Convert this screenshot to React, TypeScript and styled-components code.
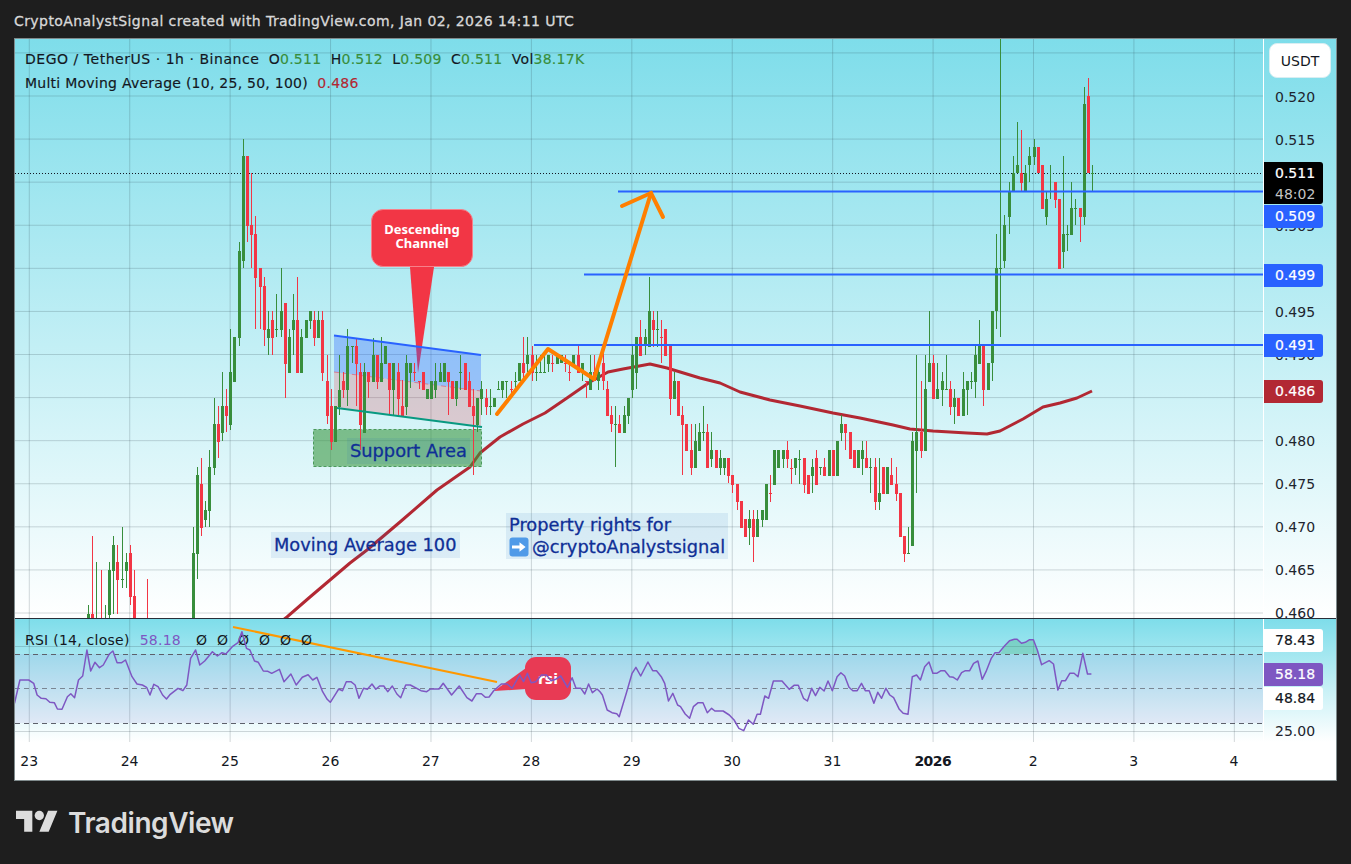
import React from 'react';
import styled, { createGlobalStyle } from 'styled-components';

const FONT = '"DejaVu Sans", "Noto Sans", sans-serif';
const UP = '#388e3c';
const DOWN = '#f23645';
const BLUE = '#2962ff';
const PURPLE = '#7e57c2';

const GlobalStyle = createGlobalStyle`
    html, body {
        margin: 0;
        padding: 0;
        background: #1e1e1e;
    }
    body {
        font-family: ${FONT};
    }
`;

const Page = styled.div`
    width: 1351px;
    height: 864px;
    background: #1e1e1e;
    overflow: hidden;
    display: flex;
    flex-direction: column;
`;

const Header = styled.div`
    height: 38px;
    box-sizing: border-box;
    padding: 3px 0 0 14px;
    display: flex;
    align-items: center;
    color: #d8d8d8;
    font-size: 14px;
    letter-spacing: 0.42px;
    -webkit-text-stroke: 0.3px #d8d8d8;
`;

const Frame = styled.div`
    width: 1321px;
    margin-left: 14px;
    border: 1px solid #7f8a8c;
    display: flex;
    flex-direction: column;
    background: #fff;
`;

const PricePane = styled.div`
    height: 579px;
    display: flex;
    background: linear-gradient(#7eddea, #ffffff);
    border-bottom: 1px solid #2a2e39;
    overflow: hidden;
`;

const RsiPane = styled.div`
    height: 123px;
    display: flex;
    background: linear-gradient(#7eddea, #ffffff);
    overflow: hidden;
`;

const Plot = styled.div`
    position: relative;
    width: 1248px;
    flex: none;
    border-right: 1px solid #ffffff;
    svg {
        display: block;
    }
`;

const Axis = styled.div`
    position: relative;
    flex: 1;
    display: flex;
    flex-direction: column;
    padding-left: 11px;
    color: #20242e;
    font-size: 14px;
`;

const PriceTicks = styled(Axis)`
    padding-top: 36px;
`;

const Tick = styled.div`
    height: 43.08px;
    flex: none;
    display: flex;
    align-items: center;
`;

const Currency = styled.div`
    position: absolute;
    top: 4px;
    left: 5px;
    width: 60px;
    height: 33px;
    border: 1px solid #d9eef2;
    border-radius: 8px;
    background: #fff;
    color: #131722;
    font-size: 14px;
    display: flex;
    align-items: center;
    justify-content: center;
`;

const Tag = styled.div<{ $top: number; $bg: string; $height?: number; $color?: string }>`
    position: absolute;
    left: 0;
    top: ${(p) => p.$top}px;
    width: 48px;
    height: ${(p) => p.$height ?? 23}px;
    padding-left: 11px;
    border-radius: 0 3px 3px 0;
    background: ${(p) => p.$bg};
    color: ${(p) => p.$color ?? '#fff'};
    font-size: 14px;
    line-height: 23px;
    -webkit-text-stroke: 0.2px ${(p) => p.$color ?? '#fff'};
`;

const Countdown = styled.div`
    color: #c4c4c4;
    font-size: 14px;
    line-height: 19px;
    -webkit-text-stroke: 0;
`;

const LastPrice = styled.div`
    line-height: 23px;
`;

const PlainTick = styled.div`
    position: absolute;
    left: 11px;
    top: 102px;
    line-height: 20px;
`;

const TimeAxis = styled.div`
    height: 38px;
    overflow: hidden;
    display: flex;
    background: #fff;
    color: #131722;
    font-size: 14px;
`;

const TimeRow = styled.div`
    margin-left: -36px;
    display: flex;
`;

const TimeLabel = styled.div<{ $strong?: boolean }>`
    width: 100.42px;
    flex: none;
    display: flex;
    align-items: center;
    justify-content: center;
    font-weight: ${(p) => (p.$strong ? 700 : 400)};
    letter-spacing: ${(p) => (p.$strong ? '-0.5px' : '0')};
`;

const Legend = styled.div`
    position: absolute;
    top: 10px;
    left: 10px;
    display: flex;
    flex-direction: column;
    gap: 3px;
    color: #131722;
    font-size: 14px;
    line-height: 21px;
    white-space: pre;
    -webkit-text-stroke: 0.15px currentColor;
`;

const LegendRow = styled.div`
    letter-spacing: 0.25px;
`;

const LegendTitle = styled.span`
    letter-spacing: 0.53px;
`;

const Value = styled.span<{ $color: string }>`
    color: ${(p) => p.$color};
`;

const RsiLegend = styled.div`
    position: absolute;
    top: 11px;
    left: 10px;
    display: flex;
    align-items: center;
    color: #131722;
    font-size: 14px;
    line-height: 20px;
    letter-spacing: 0.25px;
`;

const RsiValue = styled.span`
    color: ${PURPLE};
    margin: 0 15px 0 10px;
`;

const EmptySlot = styled.span`
    width: 21px;
    flex: none;
`;

const Callout = styled.div`
    position: absolute;
    left: 356px;
    top: 170px;
    width: 100px;
    height: 52px;
    padding-bottom: 4px;
    border: 1px solid #f7808a;
    border-radius: 12px;
    background: ${DOWN};
    color: #fff;
    font-family: "Noto Sans", sans-serif;
    font-size: 13px;
    font-weight: 700;
    line-height: 14px;
    display: flex;
    align-items: center;
    justify-content: center;
    text-align: center;
`;

const RsiCallout = styled.div`
    position: absolute;
    left: 510px;
    top: 38px;
    width: 46px;
    height: 43px;
    border-radius: 11px;
    background: #e83a54;
    color: #fff;
    font-size: 14px;
    font-weight: 700;
    display: flex;
    align-items: center;
    justify-content: center;
`;

const Note = styled.div`
    position: absolute;
    padding: 1px 3px;
    background: rgba(33, 110, 190, 0.1);
    color: #0f2f96;
    font-size: 17.8px;
    line-height: 24px;
    white-space: nowrap;
    -webkit-text-stroke: 0.3px #0f2f96;
`;

const SupportNote = styled(Note)`
    left: 332px;
    top: 399px;
`;

const AverageNote = styled(Note)`
    left: 256px;
    top: 493px;
`;

const RightsNote = styled(Note)`
    left: 491px;
    top: 474px;
    line-height: 22px;
`;

const RightsLine = styled.div`
    display: flex;
    align-items: center;
    gap: 3px;
`;

const Footer = styled.div`
    height: 83px;
    padding-left: 16px;
    display: flex;
    align-items: center;
    gap: 10px;
    color: #dcdcdc;
    font-family: Inter, sans-serif;
    font-size: 28px;
    font-weight: 600;
    letter-spacing: -0.45px;
`;

// [up, wick top, body top, body bottom, wick bottom] in page pixels, one per hour, null = off the pane
type Candle = [number, number, number, number, number] | null;
const FIRST_CANDLE = -34;
const candles: Candle[] = [
    [1,605,614,620,620],[0,536,614,620,620],[1,562,620,620,620],[0,570,620,620,620],[1,605,620,620,620],
    [1,562,570,615,618],[1,536,545,571,614],[0,545,562,580,614],[1,527,579,580,588],[1,553,562,571,588],
    [0,545,553,597,605],[0,570,596,620,620],null,null,[0,579,620,620,620],
    null,null,null,null,null,null,null,null,null,null,
    [1,527,553,620,620],[1,467,475,554,579],[0,458,484,528,536],[1,501,510,520,527],[1,450,467,511,527],
    [1,398,424,468,475],[0,406,424,442,458],[1,372,406,433,441],[0,389,406,416,432],
    [1,329,372,425,430],[1,337,337,382,382],[1,242,251,338,346],[1,139,156,261,268],[0,156,156,226,242],
    [0,173,225,235,268],[0,216,234,278,329],[0,268,268,287,329],[0,277,286,330,346],[1,311,329,338,355],
    [0,311,320,338,355],[1,294,329,330,337],[1,268,311,330,337],[0,303,303,364,398],[1,329,337,373,373],
    [1,294,320,330,355],[0,277,320,373,373],[1,329,337,373,373],[1,320,320,338,338],[1,311,311,321,329],
    [0,311,320,338,346],[1,311,320,338,338],[0,311,320,373,381],[0,355,381,416,424],[0,389,406,442,450],
    [1,406,406,442,442],[1,355,390,407,415],[0,372,381,390,398],[1,329,346,390,406],[1,346,346,347,363],
    [0,338,346,364,406],[0,363,372,425,450],[1,363,372,433,433],[0,372,372,382,398],[1,338,355,382,382],
    [0,355,355,382,389],[1,337,363,382,382],[1,346,346,364,364],[0,363,363,390,415],[1,363,363,390,415],
    [0,363,372,399,415],[0,380,406,416,416],[1,355,363,407,415],[1,363,363,373,388],[0,363,372,373,381],
    [0,381,381,382,389],[0,372,372,390,390],[1,389,389,399,399],[1,381,381,399,399],[1,363,381,390,398],
    [1,363,372,382,382],[1,363,363,382,382],[0,372,372,382,415],[0,381,381,399,399],[1,381,381,399,406],
    [1,355,372,373,390],[0,363,363,390,390],[0,372,381,407,407],[0,389,406,416,475],[1,398,398,425,432],
    [1,381,389,399,415],[0,389,398,407,415],[1,389,406,407,415],[1,398,398,407,407],[1,381,389,390,390],
    [1,381,381,390,398],[1,381,381,382,398],[0,381,389,390,398],[1,372,381,382,389],[1,363,363,381,381],
    [0,337,363,373,381],[1,337,355,364,372],[0,346,355,373,381],[1,355,372,373,381],[1,355,372,373,372],
    [1,355,372,373,372],[1,355,355,364,372],[0,355,363,364,372],[1,355,355,364,364],[1,355,355,363,363],[0,355,363,364,372],
    [0,363,372,373,381],[1,355,355,364,364],[0,345,355,373,373],[1,363,363,373,381],[0,381,381,382,398],
    [1,355,372,390,390],[0,355,372,381,381],[1,363,372,381,390],[0,346,363,381,390],[0,381,389,416,416],
    [0,406,415,424,432],[1,406,424,425,467],[0,415,424,433,433],[1,406,415,433,433],[1,398,398,416,424],
    [1,345,355,390,398],[1,337,337,373,389],[0,320,337,356,356],[1,329,337,346,355],[1,277,311,347,347],
    [0,311,320,330,347],[1,311,329,330,347],[0,320,337,338,363],[0,329,329,356,356],[0,346,346,399,415],
    [1,372,381,399,399],[0,381,381,416,416],[0,406,415,425,475],[0,424,424,451,451],[0,424,450,468,475],
    [1,424,441,468,468],[1,423,432,451,451],[1,406,432,433,441],[0,424,432,468,468],[1,432,450,459,467],
    [0,450,450,468,468],[1,450,458,468,475],[1,458,458,468,475],[0,458,458,476,483],[0,475,475,485,493],
    [0,484,484,502,510],[0,501,501,528,528],[0,519,519,537,537],[1,510,519,528,545],[0,510,519,537,562],
    [1,510,519,537,537],[1,510,510,520,527],[1,484,484,520,520],[0,475,493,494,502],[1,450,450,485,485],
    [1,450,450,468,468],[1,450,450,459,468],[0,441,450,459,468],[0,459,468,469,484],[1,459,458,468,475],
    [1,450,459,460,484],[0,458,458,485,493],[0,475,475,494,494],[1,459,467,476,493],[0,450,458,485,485],
    [1,467,467,468,475],[0,458,467,476,476],[1,450,450,476,476],[0,450,450,476,476],[1,441,441,476,476],
    [1,415,424,433,441],[0,424,424,433,450],[0,432,432,459,459],[0,450,450,468,468],[1,450,450,468,468],
    [1,441,450,459,475],[0,441,458,468,468],[1,458,467,468,493],[0,458,467,502,510],[1,458,493,502,510],
    [0,467,467,494,494],[1,467,467,494,494],[0,458,475,485,485],[0,467,484,494,501],[0,493,493,537,537],
    [0,536,536,554,562],[1,527,553,554,554],[1,432,441,546,546],[1,355,432,451,493],[0,381,432,451,458],
    [1,355,389,451,451],[1,311,363,382,382],[0,355,363,399,399],[1,363,389,399,399],[1,372,381,390,406],
    [1,355,389,390,390],[0,381,389,407,415],[1,389,398,407,424],[0,398,398,416,416],[1,372,389,416,416],
    [1,381,381,390,415],[1,372,381,382,389],[1,345,355,382,398],[1,320,346,364,364],[0,346,346,390,406],
    [1,363,363,390,390],[1,311,311,363,381],[1,234,268,311,329],[1,38,268,269,337],[1,215,225,261,268],
    [1,182,191,217,234],[1,156,173,192,192],[1,122,165,173,173],[0,130,173,183,191],[1,165,173,192,192],
    [1,147,156,165,182],[1,139,147,157,165],[0,147,147,173,173],[0,165,165,209,209],[1,191,199,217,225],
    [1,165,191,192,199],[0,182,182,200,208],[0,199,199,269,269],[1,156,234,252,268],[1,225,234,235,251],
    [1,182,208,235,235],[1,199,208,209,225],[0,208,208,217,242],[1,87,104,217,225],[0,78,96,173,173],
    [1,165,173,174,191],
];

const maLine = '283,620 287,617 310,597 330,580 350,563 367,550 400,522 437,490 470,467 480,453 500,437 523,424 545,413 567,398 590,382 608,372 623,369 650,364 667,368 700,378 720,383 740,392 770,400 800,406 833,413 860,418 893,425 910,429 933,431 967,433 987,434 1000,431 1023,419 1043,407 1060,403 1077,398 1092,391';

// traced from the pane in two passes; x in crop units is rescaled below
const rsiA = [38,310,52,240,75,240,88,250,97,285,108,295,120,296,130,307,142,308,150,327,162,328,176,290,185,281,195,293,205,240,216,228,227,150,237,213,248,187,260,203,270,195,285,163,295,153,306,188,318,188,328,180,345,230,358,252,372,255,383,262,392,285,402,253,413,260,425,285,435,297,445,283,465,265,478,272,488,255,498,175,511,150,522,195,535,183,555,155,568,168,580,158,590,162,607,140,622,128,632,95,644,145,653,150,665,183,675,187,688,213,700,214,710,220,730,208,742,245,760,222,774,255,790,232,805,224,817,240,828,232,843,275,855,298,863,307,878,280,885,267,895,272,905,245,917,245,928,255,938,295,950,265,960,268,972,252,982,268,992,258,1003,258,1013,275,1025,258,1037,282,1047,293,1060,255,1072,255,1100,272,1115,275,1125,267,1147,267,1158,250,1180,285,1200,258,1220,293,1233,303,1245,281,1258,281,1268,292,1278,291,1290,272,1310,252,1325,252,1338,265,1358,225,1368,245,1378,220,1388,248,1400,245,1415,225,1428,225,1440,242,1452,238,1465,228,1483,262,1495,233,1505,265,1518,265,1528,282,1538,252,1548,278,1560,267];
const rsiB = [0,275,5,285,15,330,25,338,35,341,40,350,55,280,67,220,75,202,85,228,100,186,110,212,118,212,128,230,135,250,143,303,152,280,162,315,168,320,178,342,187,355,195,320,205,308,215,308,224,338,233,325,240,333,257,333,270,345,280,360,290,385,300,392,310,360,320,373,328,343,335,343,344,288,352,295,362,243,380,243,395,268,405,256,414,256,425,295,433,303,442,265,450,287,459,262,468,273,476,243,485,272,495,230,503,218,511,228,520,262,528,272,537,272,546,250,554,272,562,272,572,310,580,277,588,295,597,265,605,285,613,293,625,328,633,340,643,343,652,230,661,225,669,240,678,200,687,186,695,220,703,220,712,212,720,212,730,230,738,232,746,240,755,218,763,212,772,212,780,190,789,183,798,238,806,215,817,175,825,158,833,158,845,137,855,122,865,118,871,118,880,130,888,127,897,119,905,119,913,150,922,194,938,182,947,192,956,270,964,242,972,242,981,220,990,220,998,230,1008,160,1018,222,1026,222];

const toPoints = (raw: number[], scale: number, x0: number) => {
    const out: string[] = [];
    for (let i = 0; i < raw.length; i += 2) {
        out.push(`${(x0 + raw[i] / scale).toFixed(1)},${(600 + raw[i + 1] / 3).toFixed(1)}`);
    }
    return out.join(' ');
};
const rsiLine = `${toPoints(rsiA, 2.613, 0)} ${toPoints(rsiB, 2.088, 600)}`;

const priceY = (p: number) => 96 + (0.52 - p) * 8617;
const priceLevels = Array.from({ length: 14 }, (_, i) => 0.525 - i * 0.005);
const dayLines = Array.from({ length: 13 }, (_, i) => 29.3 + i * 100.42);
const GRID = 'rgba(40, 62, 72, 0.2)';

const VerticalGrid: React.FC<{ y2: number; y1: number }> = ({ y1, y2 }) => (
    <>
        {dayLines.map((x) => (
            <line key={x} x1={x} x2={x} y1={y1} y2={y2} stroke={GRID} />
        ))}
    </>
);

const CandleSeries: React.FC = () => (
    <>
        {candles.map((c, n) => {
            if (!c) return null;
            const x = Math.round(230.3 + 4.184 * (n + FIRST_CANDLE));
            const color = c[0] ? UP : DOWN;
            return (
                <g key={n} fill={color}>
                    <rect x={x} y={c[1]} width={1} height={c[4] - c[1]} />
                    <rect x={x - 1} y={c[2]} width={3} height={Math.max(1, c[3] - c[2])} />
                </g>
            );
        })}
    </>
);

const PriceDrawing: React.FC = () => (
    <svg width={1248} height={579} viewBox="15 39 1248 579">
        {priceLevels.map((p) => (
            <line key={p} x1={15} x2={1263} y1={priceY(p)} y2={priceY(p)} stroke={GRID} />
        ))}
        <VerticalGrid y1={39} y2={618} />
        <line x1={15} x2={1263} y1={173.5} y2={173.5} stroke="#131722" strokeDasharray="1 2" />
        <polyline points={maLine} fill="none" stroke="#b22833" strokeWidth={3} strokeLinejoin="round" />
        <polygon points="410,267 434,267 418,373" fill={DOWN} />
        <polygon points="334,336 481,355 481,391 334,372" fill="rgba(41,98,255,0.33)" />
        <polygon points="334,372 481,391 481,427 338,408 334,408" fill="rgba(242,54,69,0.22)" />
        <line x1={334} y1={372} x2={481} y2={391} stroke={DOWN} strokeOpacity={0.5} strokeDasharray="5 4" />
        <rect x={313.5} y={429.5} width={168} height={37} fill="rgba(56,150,60,0.58)" stroke="#4a9a5c" strokeDasharray="3 2" />
        <CandleSeries />
        <line x1={334} y1={335.5} x2={481} y2={355} stroke={BLUE} strokeWidth={2} />
        <line x1={337} y1={408} x2={482} y2={427} stroke="#089981" strokeWidth={2} />
        <line x1={618} x2={1263} y1={191.5} y2={191.5} stroke={BLUE} strokeWidth={2} />
        <line x1={584} x2={1263} y1={274.5} y2={274.5} stroke={BLUE} strokeWidth={2} />
        <line x1={534} x2={1263} y1={345} y2={345} stroke={BLUE} strokeWidth={2} />
        <polyline
            points="497,414 548,349 594,379 651,193"
            fill="none"
            stroke="#ff7f00"
            strokeWidth={4}
            strokeLinejoin="round"
            strokeLinecap="round"
        />
        <polyline points="622,206 651,193 663,217" fill="none" stroke="#ff7f00" strokeWidth={4} strokeLinecap="round" />
    </svg>
);

const RsiDrawing: React.FC = () => (
    <svg width={1248} height={123} viewBox="15 619 1248 123">
        <line x1={15} x2={1263} y1={646.5} y2={646.5} stroke={GRID} />
        <line x1={15} x2={1263} y1={731.5} y2={731.5} stroke={GRID} />
        <VerticalGrid y1={619} y2={742} />
        <rect x={15} y={654} width={1248} height={69} fill="rgba(126,87,194,0.1)" />
        <line x1={15} x2={1263} y1={654.5} y2={654.5} stroke="#5d606b" strokeDasharray="5 4" />
        <line x1={15} x2={1263} y1={688.5} y2={688.5} stroke="#5d606b" strokeOpacity={0.7} strokeDasharray="5 4" />
        <line x1={15} x2={1263} y1={723.5} y2={723.5} stroke="#5d606b" strokeDasharray="5 4" />
        <polygon points="1000,654 1005,646 1009,641 1014,639 1017,639 1021,643 1025,642 1030,640 1033,640 1037,650 1039,654" fill="rgba(56,170,110,0.3)" />
        <line x1={233} y1={627} x2={497} y2={682} stroke="#ff9800" strokeWidth={2} />
        <polygon points="494,691 526,668 526,689" fill="#e83a54" />
    </svg>
);

const RsiLineOverlay = styled.svg`
    position: absolute;
    left: 0;
    top: 0;
    pointer-events: none;
`;

const RightArrow: React.FC = () => (
    <svg width={20} height={20} viewBox="0 0 20 20">
        <rect x={0.5} y={0.5} width={19} height={19} rx={3} fill="#4f9ae8" />
        <path d="M3 8.4h7.5V5.2L16.6 10l-6.1 4.8v-3.2H3z" fill="#fff" />
    </svg>
);

const Logo: React.FC = () => (
    <svg width={42} height={33} viewBox="0 0 36 28" fill="#dcdcdc">
        <path d="M14 22H7V11H0V4h14v18zM28 22h-8l7.5-18h8L28 22z" />
        <circle cx={20} cy={8} r={4} />
    </svg>
);

const prices = ['0.520', '0.515', '0.510', '0.505', '0.500', '0.495', '0.490', '0.485', '0.480', '0.475', '0.470', '0.465', '0.460'];
const days = ['23', '24', '25', '26', '27', '28', '29', '30', '31', '2026', '2', '3', '4'];

const App: React.FC = () => {
    return (
        <Page>
            <GlobalStyle />
            <Header>CryptoAnalystSignal created with TradingView.com, Jan 02, 2026 14:11 UTC</Header>
            <Frame>
                <PricePane>
                    <Plot>
                        <PriceDrawing />
                        <Legend>
                            <LegendRow>
                                <LegendTitle>DEGO / TetherUS · 1h · Binance</LegendTitle>
                                {'  '}O<Value $color={UP}>0.511</Value>{'  '}H
                                <Value $color={UP}>0.512</Value>{'  '}L<Value $color={UP}>0.509</Value>{'  '}C
                                <Value $color={UP}>0.511</Value>{'  '}Vol<Value $color={UP}>38.17K</Value>
                            </LegendRow>
                            <LegendRow>
                                Multi Moving Average (10, 25, 50, 100){'  '}
                                <Value $color="#b22833">0.486</Value>
                            </LegendRow>
                        </Legend>
                        <Callout>
                            <span>
                                Descending
                                <br />
                                Channel
                            </span>
                        </Callout>
                        <SupportNote>Support Area</SupportNote>
                        <AverageNote>Moving Average 100</AverageNote>
                        <RightsNote>
                            <div>Property rights for</div>
                            <RightsLine>
                                <RightArrow />
                                @cryptoAnalystsignal
                            </RightsLine>
                        </RightsNote>
                    </Plot>
                    <PriceTicks>
                        {prices.map((p) => (
                            <Tick key={p}>{p}</Tick>
                        ))}
                        <Currency>USDT</Currency>
                        <Tag $top={123} $bg="#000" $height={42}>
                            <LastPrice>0.511</LastPrice>
                            <Countdown>48:02</Countdown>
                        </Tag>
                        <Tag $top={166} $bg={BLUE}>0.509</Tag>
                        <Tag $top={225} $bg={BLUE}>0.499</Tag>
                        <Tag $top={295} $bg={BLUE}>0.491</Tag>
                        <Tag $top={341} $bg="#b22833">0.486</Tag>
                    </PriceTicks>
                </PricePane>
                <RsiPane>
                    <Plot>
                        <RsiDrawing />
                        <RsiLegend>
                            RSI (14, close)
                            <RsiValue>58.18</RsiValue>
                            {[0, 1, 2, 3, 4, 5].map((n) => (
                                <EmptySlot key={n}>Ø</EmptySlot>
                            ))}
                        </RsiLegend>
                        <RsiCallout>rsi</RsiCallout>
                        <RsiLineOverlay width={1248} height={123} viewBox="15 619 1248 123">
                            <polyline points={rsiLine} fill="none" stroke={PURPLE} strokeWidth={1.5} strokeLinejoin="round" />
                        </RsiLineOverlay>
                    </Plot>
                    <Axis>
                        <Tag $top={10} $bg="#fff" $color="#131722">78.43</Tag>
                        <Tag $top={44} $bg={PURPLE}>58.18</Tag>
                        <Tag $top={68} $bg="#fff" $color="#131722">48.84</Tag>
                        <PlainTick>25.00</PlainTick>
                    </Axis>
                </RsiPane>
                <TimeAxis>
                    <TimeRow>
                        {days.map((d) => (
                            <TimeLabel key={d} $strong={d === '2026'}>
                                {d}
                            </TimeLabel>
                        ))}
                    </TimeRow>
                </TimeAxis>
            </Frame>
            <Footer>
                <Logo />
                TradingView
            </Footer>
        </Page>
    );
};

export default App;
